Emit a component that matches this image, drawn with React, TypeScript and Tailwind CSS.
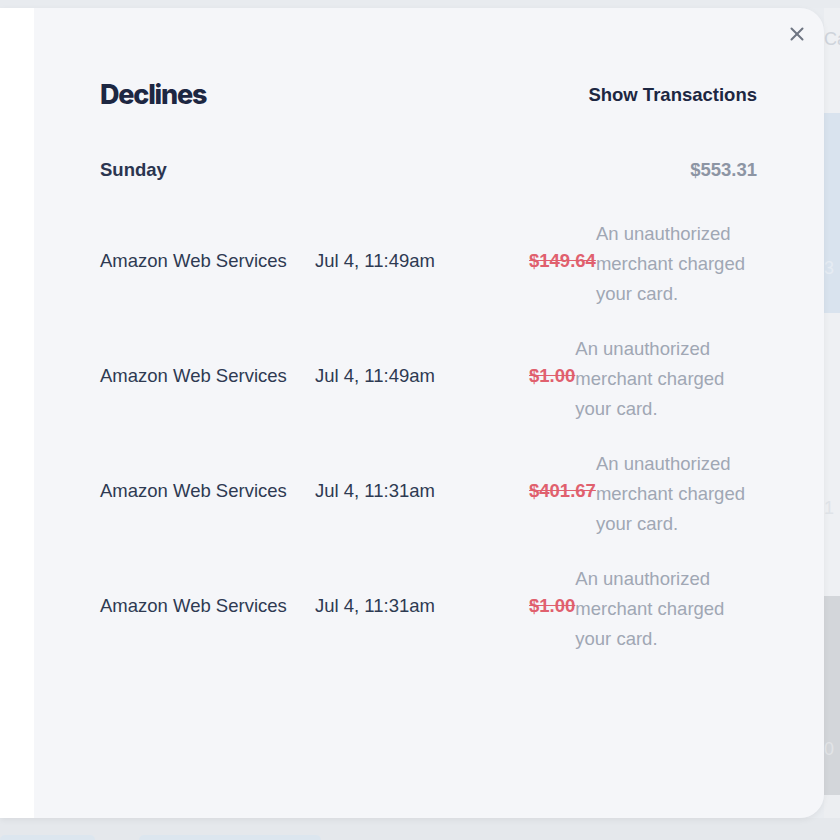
import { X } from "lucide-react";

type Decline = {
  id: number;
  merchant: string;
  time: string;
  amount: string;
};

const declines: Decline[] = [
  { id: 1, merchant: "Amazon Web Services", time: "Jul 4, 11:49am", amount: "$149.64" },
  { id: 2, merchant: "Amazon Web Services", time: "Jul 4, 11:49am", amount: "$1.00" },
  { id: 3, merchant: "Amazon Web Services", time: "Jul 4, 11:31am", amount: "$401.67" },
  { id: 4, merchant: "Amazon Web Services", time: "Jul 4, 11:31am", amount: "$1.00" },
];

const sans = "font-['Liberation_Sans',Arial,sans-serif]";

export default function App() {
  return (
    <div className={`relative w-[840px] h-[840px] overflow-hidden bg-[#e9ecf0] ${sans}`}>
      {/* Faded page behind the sheet */}
      <div className="flex flex-col h-full">
        <div className="h-[8px] bg-[#e8ebef]" />
        <div className="flex flex-1">
          <div className="flex-1" />
          <div className="w-[16px] flex flex-col text-[18px] text-[#cfd4db] overflow-hidden">
            <div className="h-[105px] bg-[#eef0f3] pt-[18px] whitespace-nowrap">Ca</div>
            <div className="h-[200px] bg-[#d9e3ee] pt-[142px] text-[#e6ecf3]">3</div>
            <div className="h-[283px] bg-[#eef0f3] pt-[182px] text-[#dfe3e8]">1</div>
            <div className="h-[199px] bg-[#d3d6da] pt-[140px] text-[#e2e4e7]">0</div>
            <div className="flex-1 bg-[#eceef1]" />
          </div>
        </div>
        <div className="h-[22px] bg-[#e5e8ec] flex items-end gap-[44px]">
          <div className="w-[95px] h-[5px] rounded-t-full bg-[#dce6ef]" />
          <div className="w-[182px] h-[5px] rounded-t-full bg-[#dce6ef]" />
        </div>
      </div>

      {/* Declines sheet */}
      <div className="absolute left-0 top-[8px] w-[824px] h-[810px] flex shadow-[0_2px_6px_rgba(0,0,0,0.06)] rounded-r-[24px]">
        <div className="w-[34px] bg-white" />
        <div className="relative flex-1 bg-[#f5f6f9] rounded-r-[24px] pl-[66px] pr-[67px] pt-[71px]">
          <button className="absolute right-[16px] top-[15px] text-[#6e7582]">
            <X size={22} strokeWidth={2.2} />
          </button>

          <div className="flex items-center justify-between h-[32px]">
            <h2 className="font-['Inter',sans-serif] font-extrabold text-[27px] tracking-[-0.045em] text-[#1d2742]">
              Declines
            </h2>
            <span className="font-bold text-[18.5px] text-[#1d2742]">Show Transactions</span>
          </div>

          <div className="flex items-center justify-between mt-[47px] h-[24px]">
            <span className="font-bold text-[18.5px] text-[#2b3550]">Sunday</span>
            <span className="font-bold text-[18.5px] text-[#8d95a4]">$553.31</span>
          </div>

          <div className="flex flex-col gap-[19px] mt-[31px]">
            {declines.map((d) => (
              <div key={d.id} className="flex items-center text-[18.5px]">
                <span className="w-[215px] text-[#2e3a52]">{d.merchant}</span>
                <span className="w-[214px] text-[#2e3a52]">{d.time}</span>
                <span className="font-bold text-[#e0606e] line-through">{d.amount}</span>
                <p className="w-[160px] pt-[6px] leading-[30px] text-[#a0a7b4]">
                  An unauthorized merchant charged your card.
                </p>
              </div>
            ))}
          </div>
        </div>
      </div>
    </div>
  );
}
